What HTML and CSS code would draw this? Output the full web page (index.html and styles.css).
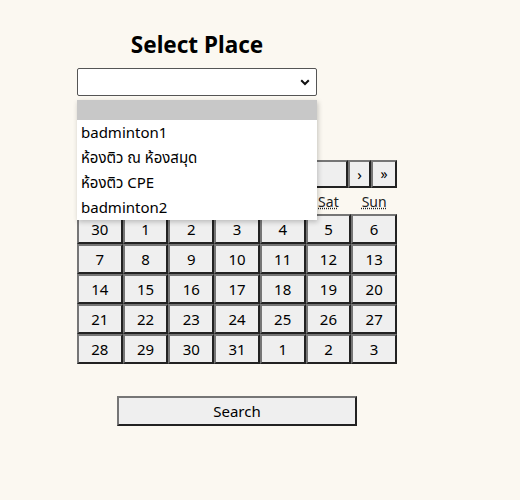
FILE: index.html
```html
<!DOCTYPE html>
<html>
<head>
<meta charset="utf-8">
<link rel="stylesheet" href="styles.css">
</head>
<body>
<div class="page">
  <div class="picker">
    <h2 class="title">Select Place</h2>
    <div class="select-wrap">
      <div class="select">
        <svg class="chev" width="10" height="7" viewBox="0 0 10 7"><path d="M1.2 1.2 L5 5 L8.8 1.2" fill="none" stroke="#111" stroke-width="2"/></svg>
      </div>
      <ul class="options">
        <li class="opt selected">&nbsp;</li>
        <li class="opt">badminton1</li>
        <li class="opt">ห้องติว ณ ห้องสมุด</li>
        <li class="opt">ห้องติว CPE</li>
        <li class="opt">badminton2</li>
      </ul>
    </div>
  </div>
  <div class="calendar">
    <div class="nav">
      <button class="btn nav-btn dbl">«</button>
      <button class="btn nav-btn">‹</button>
      <button class="btn nav-label">October 2024</button>
      <button class="btn nav-btn">›</button>
      <button class="btn nav-btn dbl">»</button>
    </div>
    <div class="weekdays">
      <div class="wd"><abbr title="Monday">Mon</abbr></div>
      <div class="wd"><abbr title="Tuesday">Tue</abbr></div>
      <div class="wd"><abbr title="Wednesday">Wed</abbr></div>
      <div class="wd"><abbr title="Thursday">Thu</abbr></div>
      <div class="wd"><abbr title="Friday">Fri</abbr></div>
      <div class="wd"><abbr title="Saturday">Sat</abbr></div>
      <div class="wd"><abbr title="Sunday">Sun</abbr></div>
    </div>
    <div class="days">
      <button class="btn tile">30</button><button class="btn tile">1</button><button class="btn tile">2</button><button class="btn tile">3</button><button class="btn tile">4</button><button class="btn tile">5</button><button class="btn tile">6</button>
      <button class="btn tile">7</button><button class="btn tile">8</button><button class="btn tile">9</button><button class="btn tile">10</button><button class="btn tile">11</button><button class="btn tile">12</button><button class="btn tile">13</button>
      <button class="btn tile">14</button><button class="btn tile">15</button><button class="btn tile">16</button><button class="btn tile">17</button><button class="btn tile">18</button><button class="btn tile">19</button><button class="btn tile">20</button>
      <button class="btn tile">21</button><button class="btn tile">22</button><button class="btn tile">23</button><button class="btn tile">24</button><button class="btn tile">25</button><button class="btn tile">26</button><button class="btn tile">27</button>
      <button class="btn tile">28</button><button class="btn tile">29</button><button class="btn tile">30</button><button class="btn tile">31</button><button class="btn tile">1</button><button class="btn tile">2</button><button class="btn tile">3</button>
    </div>
  </div>
  <button class="btn search">Search</button>
</div>
</body>
</html>
```
FILE: styles.css
```css
html, body {
  margin: 0;
  padding: 0;
  background: #fbf8f1;
}
body {
  font-family: "Noto Sans", "Noto Sans Thai", sans-serif;
  color: #000;
}
.page {
  padding: 31px 0 0 77px;
  width: 320px;
  display: flex;
  flex-direction: column;
}
.picker {
  width: 240px;
  display: flex;
  flex-direction: column;
}
.title {
  margin: 0;
  height: 28px;
  line-height: 28px;
  font-size: 22.5px;
  font-weight: 700;
  text-align: center;
}
.select-wrap {
  position: relative;
  margin-top: 9px;
}
.select {
  box-sizing: border-box;
  height: 28px;
  background: #fff;
  border: 1px solid #555;
  border-radius: 2px;
  display: flex;
  align-items: center;
  justify-content: flex-end;
  padding-right: 6px;
}
.chev { display: block; }
.options {
  position: absolute;
  left: 0;
  top: 32px;
  width: 240px;
  margin: 0;
  padding: 0;
  list-style: none;
  background: #fff;
  box-shadow: 1px 2px 5px rgba(0,0,0,0.22);
  z-index: 5;
  font-size: 15px;
}
.opt {
  height: 25px;
  line-height: 25px;
  padding-left: 4px;
  white-space: nowrap;
}
.opt.selected {
  height: 20px;
  background: #c8c8c8;
}
.calendar {
  margin-top: 64px;
  width: 320px;
}
.btn {
  box-sizing: border-box;
  font-family: "Noto Sans", sans-serif;
  background: #efefef;
  color: #000;
  border-style: solid;
  border-width: 2px;
  border-color: #767676 #222 #222 #767676;
  padding: 0;
  margin: 0;
}
.nav {
  display: flex;
  height: 28px;
}
.nav-btn {
  width: 23px;
  height: 28px;
  font-size: 15px;
  line-height: 1;
}
.nav-btn.dbl {
  width: 26px;
  font-size: 14px;
}
.nav-label {
  flex: 1;
  height: 28px;
  font-size: 14px;
}
.weekdays {
  display: grid;
  grid-template-columns: repeat(7, 1fr);
  height: 26px;
  padding-top: 2px;
  box-sizing: border-box;
  font-size: 14px;
  color: #222;
}
.wd {
  text-align: center;
  line-height: 24px;
}
.wd abbr {
  text-decoration: underline dotted;
}
.days {
  display: grid;
  grid-template-columns: repeat(7, 1fr);
  grid-auto-rows: 30px;
}
.tile {
  height: 30px;
  font-size: 15px;
}
.search {
  margin-top: 32px;
  margin-left: 40px;
  width: 240px;
  height: 30px;
  font-size: 15px;
}
```
